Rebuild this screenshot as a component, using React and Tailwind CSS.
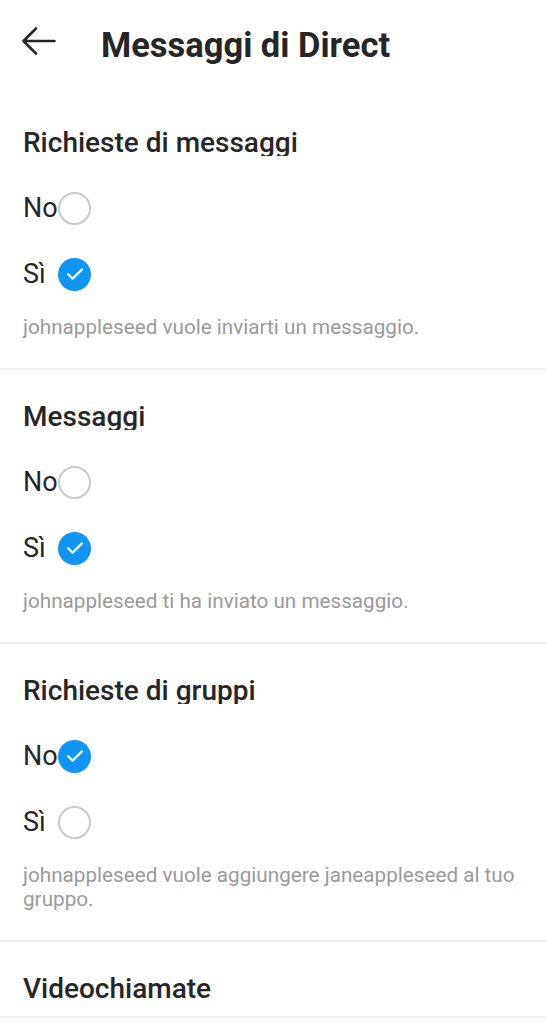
const sections = [
  { title: 'Richieste di messaggi', selected: 'si', note: 'johnappleseed vuole inviarti un messaggio.' },
  { title: 'Messaggi', selected: 'si', note: 'johnappleseed ti ha inviato un messaggio.' },
  { title: 'Richieste di gruppi', selected: 'no', note: 'johnappleseed vuole aggiungere janeappleseed al tuo gruppo.' }
];

function Radio({ checked }) {
  if (checked) {
    return (
      <span className="w-[33px] h-[33px] rounded-full bg-[#0f95f3] flex items-center justify-center">
        <svg width="18" height="14" viewBox="0 0 18 14" fill="none">
          <path d="M2 7.2l4.6 4.4L16 2.4" stroke="white" strokeWidth="2.2" strokeLinecap="round" strokeLinejoin="round" />
        </svg>
      </span>
    );
  }
  return <span className="w-[33px] h-[33px] rounded-full border-[2.5px] border-[#c9c9c9]" />;
}

function Option({ label, checked }) {
  return (
    <div className="h-[66px] grid grid-cols-[35px_auto] items-center">
      <span className="text-[27px] text-[#262626] leading-none">{label}</span>
      <Radio checked={checked} />
    </div>
  );
}

function Heading({ children }) {
  return (
    <h2 className="h-[29px] overflow-hidden text-[28px] leading-[32px] font-medium text-[#262626]">{children}</h2>
  );
}

export default function App() {
  return (
    <div className="w-[547px] min-h-[1024px] bg-white" style={{ fontFamily: 'Roboto, "Noto Sans", sans-serif' }}>
      <header className="h-[90px] flex items-center">
        <div className="w-[101px] pl-[21px] mb-[8px]">
          <svg width="36" height="30" viewBox="0 0 36 30" fill="none">
            <path d="M2.5 15h31M15 2.5L2.5 15 15 27.5" stroke="#262626" strokeWidth="2.6" strokeLinecap="round" strokeLinejoin="round" />
          </svg>
        </div>
        <h1 className="text-[34.5px] font-bold text-[#262626] leading-none">Messaggi di Direct</h1>
      </header>

      {sections.map((s, i) => (
        <div key={s.title}>
          <section className={`px-[23px] pb-[29px] ${i === 0 ? 'pt-[37px]' : 'pt-[31px]'}`}>
            <Heading>{s.title}</Heading>
            <div className="mt-[19px]">
              <Option label="No" checked={s.selected === 'no'} />
              <Option label="Sì" checked={s.selected === 'si'} />
            </div>
            <p className="mt-[8px] text-[20.7px] leading-[24px] text-[#9a9a9a]">{s.note}</p>
          </section>
          <div className="h-[2px] bg-[#f0f0f0]" />
        </div>
      ))}

      <section className="px-[23px] pt-[31px] pb-[14px]">
        <Heading>Videochiamate</Heading>
      </section>
      <div className="h-[2px] bg-[#f0f0f0]" />
    </div>
  );
}
